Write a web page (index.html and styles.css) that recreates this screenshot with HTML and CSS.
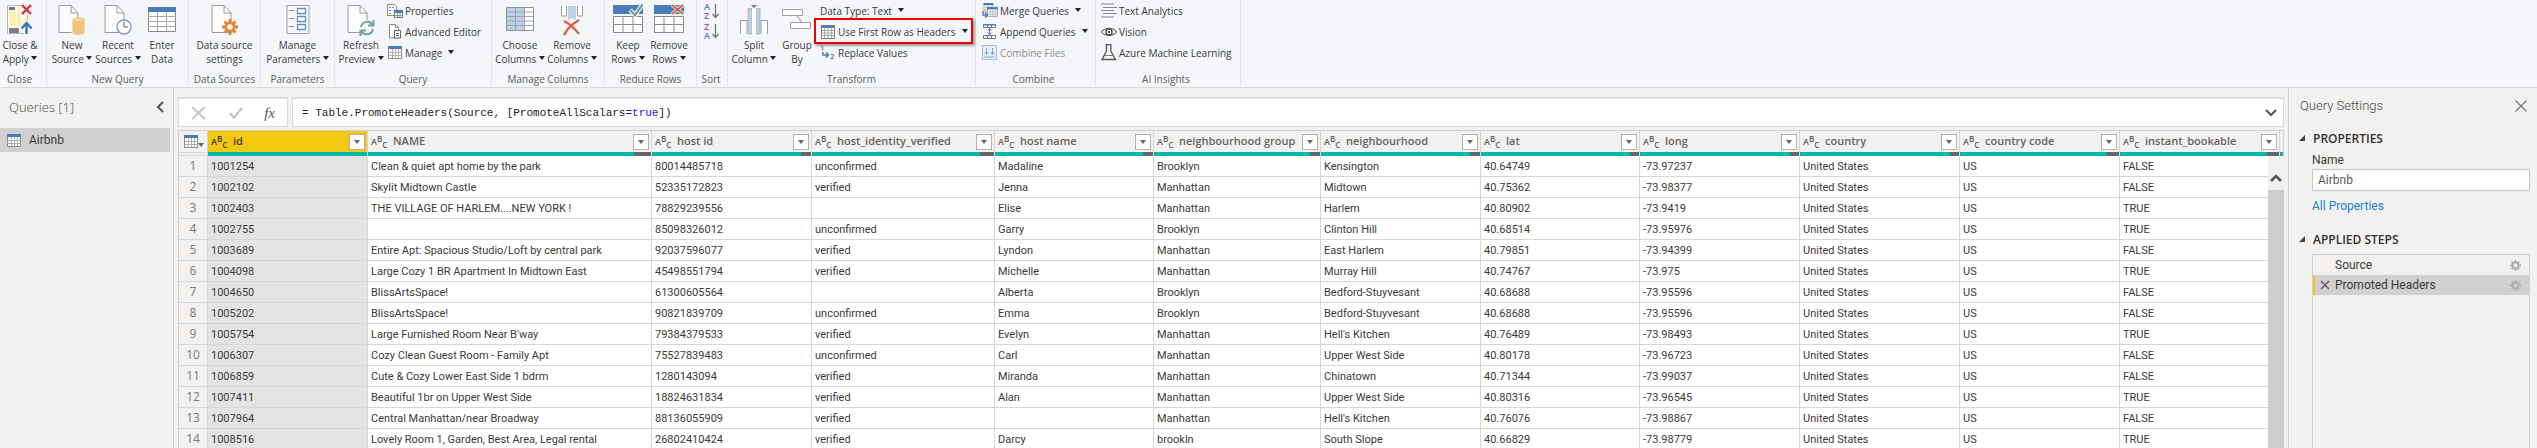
FILE: index.html
```
<!DOCTYPE html>
<html lang="en">
<head>
<meta charset="utf-8">
<title>Power Query Editor</title>
<link rel="stylesheet" href="styles.css">
</head>
<body>
<svg class="defs" aria-hidden="true">
  <symbol id="i-tbl" viewBox="0 0 14 13"><path d="M.5 .5h13v12H.5z" fill="#fff" stroke="#8a8a8a"/><path d="M.5 6.5h13M.5 9.5h13M4.5 3v9.5M7.5 3v9.5M10.5 3v9.5" stroke="#b0b0b0" fill="none"/><path d="M0 0h14v3H0z" fill="#4a7ebb"/></symbol>
  <symbol id="i-page" viewBox="0 0 20 28"><path d="M.5 .5h12l7 7.500v19.500H.5z" fill="#fdfdfd" stroke="#9a9a9a"/><path d="M12.500 .5v7.500h7" fill="none" stroke="#9a9a9a"/></symbol>
  <symbol id="i-down" viewBox="0 0 6 4"><path d="M0 0h6L3 4z" fill="currentColor"/></symbol>
  <symbol id="i-gear" viewBox="0 0 16 16"><path d="M8 0v16M0 8h16M2.500 2.500l11 11M13.500 2.500l-11 11" stroke="currentColor" stroke-width="3"/><circle cx="8" cy="8" r="4.200" fill="none" stroke="currentColor" stroke-width="2.600"/><circle cx="8" cy="8" r="2.800" fill="var(--hole)"/></symbol>
</svg>

<header class="ribbon">
  <section class="group g-close">
    <div class="tools">
      <button class="big"><svg width="28" height="32" viewBox="0 0 28 32"><path d="M1.500 1.500h20v28h-20z" fill="#fff" stroke="#b5b5b5"/><path d="M3 3h6v3H3z" fill="#777"/><path d="M3 8h7v14H3zM11 3h4v19h-4z" fill="#ffefb0"/><path d="M12 22 21 12v10z" fill="#ffefb0"/><path d="M3 24h10v5H3z" fill="#808080"/><path d="m16 1 9 9m0-9-9 9" stroke="#f4f6f9" stroke-width="5"/><path d="m16 1 9 9m0-9-9 9" stroke="#d13438" stroke-width="2.400"/><path d="M20.500 30V20m-5 4.500 5-5.500 5 5.500" stroke="#f4f6f9" stroke-width="5" fill="none"/><path d="M20.500 30V20m-5 4.500 5-5.500 5 5.500" stroke="#3b77b7" stroke-width="2.400" fill="none"/></svg><span>Close &amp;<br>Apply <svg class="dd"><use href="#i-down"/></svg></span></button>
    </div>
    <h2>Close</h2>
  </section>
  <section class="group g-new">
    <div class="tools">
      <button class="big"><svg width="28" height="32" viewBox="0 0 28 32"><use href="#i-page" x="0" y="1" width="21" height="28"/><path d="M14 16h13v13c0 3-13 3-13 0z" fill="#edc67a" stroke="#f4f6f9"/><ellipse cx="20.500" cy="16" rx="6" ry="2" fill="#f5d99a" stroke="#dcb05c" stroke-width=".6"/></svg><span>New<br>Source <svg class="dd"><use href="#i-down"/></svg></span></button>
      <button class="big"><svg width="28" height="32" viewBox="0 0 28 32"><use href="#i-page" x="0" y="1" width="21" height="28"/><circle cx="20" cy="23" r="7" fill="#fff" stroke="#6d9bd0" stroke-width="1.300"/><path d="M20 18v5h4" fill="none" stroke="#555"/></svg><span>Recent<br>Sources <svg class="dd"><use href="#i-down"/></svg></span></button>
      <button class="big"><svg width="28" height="32" viewBox="0 0 28 32"><path d="M.5 3.500h27v24H.5z" fill="#fff" stroke="#8a8a8a"/><path d="M.5 12.500h27M.5 17.500h27M.5 22.500h27M9.500 8v19M18.500 8v19" stroke="#a8a8a8"/><path d="M0 3h28v5H0z" fill="#4a7ebb"/></svg><span>Enter<br>Data</span></button>
    </div>
    <h2>New Query</h2>
  </section>
  <section class="group g-source">
    <div class="tools">
      <button class="big"><svg width="28" height="32" viewBox="0 0 28 32"><use href="#i-page" x="0" y="1" width="21" height="28"/><svg class="gear-orange" x="11" y="15" width="16" height="16"><use href="#i-gear"/></svg></svg><span>Data source<br>settings</span></button>
    </div>
    <h2>Data Sources</h2>
  </section>
  <section class="group g-param">
    <div class="tools">
      <button class="big"><svg width="24" height="32" viewBox="0 0 24 32"><path d="M1 1.500h22v28H1z" fill="#fdfdfd" stroke="#9a9a9a"/><path d="M3 6.500h5M3 14.500h5M3 22.500h5" stroke="#888"/><path d="M11.500 4.500h8v5h-8zM11.500 12.500h8v5h-8zM11.500 20.500h8v5h-8z" fill="#fff" stroke="#5b8cc7" stroke-width="1.300"/></svg><span>Manage<br>Parameters <svg class="dd"><use href="#i-down"/></svg></span></button>
    </div>
    <h2>Parameters</h2>
  </section>
  <section class="group g-query">
    <div class="tools">
      <button class="big"><svg width="28" height="32" viewBox="0 0 28 32"><use href="#i-page" x="0" y="1" width="21" height="28"/><circle cx="20" cy="24" r="8" fill="#f4f6f9"/><path d="M14 23c1-6 9-7 12-2M26.500 16v5.500H21M26 25c-1 6-9 7-12 2M13.500 32v-5.500H19" fill="none" stroke="#6fa692" stroke-width="2"/></svg><span>Refresh<br>Preview <svg class="dd"><use href="#i-down"/></svg></span></button>
      <div class="list">
        <button class="small"><svg width="16" height="14" viewBox="0 0 16 14"><path d="M.5 .5h7l2 2v9H.5z" fill="#fff" stroke="#8a8a8a"/><path d="M2 3.500h2M2 6.500h2M2 9.500h2M5 3.500h2" stroke="#888"/><path d="M7.500 7h8v6.500h-8z" fill="#fff" stroke="#777"/><path d="M7 6h9v3H7z" fill="#4a7ebb"/><path d="M8 11.500h7M10.500 9v4M13 9v4" stroke="#999"/></svg>Properties</button>
        <button class="small"><svg width="16" height="15" viewBox="0 0 16 15"><path d="M2.500 .5h6l3 3v10.500h-9z" fill="#fff" stroke="#8a8a8a"/><path d="M8.500 .5v3h3" fill="none" stroke="#8a8a8a"/><path d="M7.500 6.500h6v7.500h-6z" fill="#fff" stroke="#666"/><path d="M9 9.500h3M9 11.500h3" stroke="#666"/></svg>Advanced Editor</button>
        <button class="small"><svg width="16" height="13" viewBox="-1 0 16 13"><use href="#i-tbl" width="14" height="13"/></svg>Manage <svg class="dd"><use href="#i-down"/></svg></button>
      </div>
    </div>
    <h2>Query</h2>
  </section>
  <section class="group g-cols">
    <div class="tools">
      <button class="big"><svg width="28" height="32" viewBox="0 0 28 32"><path d="M.5 3.500h27v23H.5z" fill="#fff" stroke="#9a9a9a"/><path d="M1 3h17v23H1z" fill="#bdd0e6"/><path d="M.5 8h27M.5 12.500h27M.5 17h27M.5 21.500h27M9.500 3v23M18.500 3v23" stroke="#9aa5b2"/><path d="M.5 3.500h27v23H.5z" fill="none" stroke="#8a94a0"/></svg><span>Choose<br>Columns <svg class="dd"><use href="#i-down"/></svg></span></button>
      <button class="big"><svg width="24" height="32" viewBox="0 0 24 32"><path d="M1.500 2v10h5V2M17.500 2v10h5V2" fill="#fff" stroke="#9a9a9a"/><path d="M8 2h8v14l-4-2-4 2z" fill="#bdd0e6"/><path d="M4 17c6 3 11 8 15 13M19 16C12 20 7 25 4 31" fill="none" stroke="#d9603b" stroke-width="2.200"/></svg><span>Remove<br>Columns <svg class="dd"><use href="#i-down"/></svg></span></button>
    </div>
    <h2>Manage Columns</h2>
  </section>
  <section class="group g-rows">
    <div class="tools">
      <button class="big"><svg width="30" height="32" viewBox="0 0 30 32"><path d="M0 1h30v9H0z" fill="#4a7ebb"/><path d="M.5 12.500h29v16H.5zM.5 20.500h29M10 12.500v16M20 12.500v16" fill="#fff" stroke="#8a8a8a"/><path d="m17 6 5 5 8-11" fill="none" stroke="#f4f6f9" stroke-width="4.500"/><path d="m17 6 5 5 8-11" fill="none" stroke="#6fa692" stroke-width="2.400"/></svg><span>Keep<br>Rows <svg class="dd"><use href="#i-down"/></svg></span></button>
      <button class="big"><svg width="30" height="32" viewBox="0 0 30 32"><path d="M0 1h30v9H0z" fill="#4a7ebb"/><path d="M.5 12.500h29v16H.5zM.5 20.500h29M10 12.500v16M20 12.500v16" fill="#fff" stroke="#8a8a8a"/><path d="m18 1 11 9m0-9-11 9" stroke="#f4f6f9" stroke-width="3.500"/><path d="m18 1 11 9m0-9-11 9" stroke="#d9603b" stroke-width="2"/></svg><span>Remove<br>Rows <svg class="dd"><use href="#i-down"/></svg></span></button>
    </div>
    <h2>Reduce Rows</h2>
  </section>
  <section class="group g-sort">
    <div class="tools">
      <button class="sort" aria-label="Sort ascending"><svg width="16" height="17" viewBox="0 0 16 17"><g font-family="Open Sans, sans-serif" font-size="9" font-weight="600"><text x="0" y="7" fill="#4a7ebb">A</text><text x="0" y="16" fill="#8a5fb0">Z</text></g><path d="M11.500 1v13M8.500 11l3 3.500 3-3.500" fill="none" stroke="#777" stroke-width="1.300"/></svg></button>
      <button class="sort" aria-label="Sort descending"><svg width="16" height="17" viewBox="0 0 16 17"><g font-family="Open Sans, sans-serif" font-size="9" font-weight="600"><text x="0" y="7" fill="#8a5fb0">Z</text><text x="0" y="16" fill="#4a7ebb">A</text></g><path d="M11.500 1v13M8.500 11l3 3.500 3-3.500" fill="none" stroke="#777" stroke-width="1.300"/></svg></button>
    </div>
    <h2>Sort</h2>
  </section>
  <section class="group g-trans">
    <div class="tools">
      <button class="big"><svg width="30" height="32" viewBox="0 0 30 32"><path d="M1.500 30V16.500h6.500V30M22 30V16.500h6.500V30" fill="#fff" stroke="#9a9a9a"/><path d="M9 4.500h4V30H9zM17 4.500h4V30h-4z" fill="#bdd0e6" stroke="#9aa9ba" stroke-width=".7"/><path d="M13 5h4v25h-4z" fill="#fff"/><path d="M12 1h6l-3 3z" fill="#4a7ebb"/></svg><span>Split<br>Column <svg class="dd"><use href="#i-down"/></svg></span></button>
      <button class="big"><svg width="30" height="32" viewBox="0 0 30 32"><path d="M.5 5.500h20v6H.5zM8.500 18.500h20v6h-20z" fill="#fff" stroke="#a0a0a0"/><path d="m15 12 5 6" stroke="#888"/></svg><span>Group<br>By</span></button>
      <div class="list">
        <button class="small">Data Type: Text <svg class="dd"><use href="#i-down"/></svg></button>
        <button class="small marked"><svg width="16" height="14" viewBox="0 0 16 14"><path d="M1.500 .5h13v13h-13z" fill="#fff" stroke="#777"/><path d="M1.500 5.500h13M1.500 8h13M1.500 10.500h13M4.500 3v10M8 3v10M11.500 3v10" stroke="#a8a8a8"/><path d="M1 0h14v3H1z" fill="#5c7fa8"/></svg>Use First Row as Headers <svg class="dd"><use href="#i-down"/></svg></button>
        <button class="small"><svg width="16" height="15" viewBox="0 0 16 15"><g font-family="Open Sans, sans-serif" font-size="8" fill="#444"><text x="0" y="6">1</text><text x="10" y="14">2</text></g><path d="M3 7v3h5M6 7.500 8.500 10 6 12.500" fill="none" stroke="#4a7ebb" stroke-width="1.500"/></svg>Replace Values</button>
      </div>
    </div>
    <h2>Transform</h2>
  </section>
  <section class="group g-comb">
    <div class="tools">
      <div class="list">
        <button class="small"><svg width="16" height="15" viewBox="0 0 16 15"><use href="#i-tbl" x="1" width="11" height="9"/><use href="#i-tbl" x="5" y="4" width="11" height="10"/><path d="M1 8v4h4M3 9.500 5.500 12 3 14.500" fill="none" stroke="#4a7ebb" stroke-width="1.500"/></svg>Merge Queries <svg class="dd"><use href="#i-down"/></svg></button>
        <button class="small"><svg width="16" height="15" viewBox="0 0 16 15"><path d="M1.500 .5h12v3h-12zM1.500 11.500h12v3h-12zM5.500 1v3M9.500 1v3M5.500 11v3M9.500 11v3" fill="#fff" stroke="#777"/><path d="M1 0h13v1.500H1z" fill="#4a7ebb"/><path d="M7.500 5v5M5.500 6.500l2-2 2 2M5.500 8.500l2 2 2-2" fill="none" stroke="#4a7ebb"/></svg>Append Queries <svg class="dd"><use href="#i-down"/></svg></button>
        <button class="small" disabled><svg width="16" height="15" viewBox="0 0 16 15"><path d="M.5 .5h14v14H.5z" fill="#e6edf6" stroke="#a9bdd4"/><path d="M4.500 3v6M2.500 7l2 2.500 2-2.500M10.500 3v6M8.500 7l2 2.500 2-2.500M2.500 12h10" fill="none" stroke="#8aa6c8"/></svg>Combine Files</button>
      </div>
    </div>
    <h2>Combine</h2>
  </section>
  <section class="group g-ai">
    <div class="tools">
      <div class="list">
        <button class="small"><svg width="16" height="15" viewBox="0 0 16 15"><path d="M0 1h13M2 4.500h14M0 7.500h13M2 10.500h14M0 14h13" stroke="#858585"/></svg>Text Analytics</button>
        <button class="small"><svg width="16" height="12" viewBox="0 0 16 12"><path d="M.5 6C4 1 12 1 15.500 6 12 10.500 4 10.500.5 6z" fill="#fff" stroke="#555" stroke-width="1.200"/><circle cx="8" cy="6" r="3" fill="none" stroke="#555" stroke-width="1.500"/><circle cx="8" cy="6" r="1.200" fill="#555"/></svg>Vision</button>
        <button class="small"><svg width="16" height="17" viewBox="0 0 16 17"><path d="M4.500 .7h6M5.500 1v6L1 15.500h13.500L9.800 7V1" fill="none" stroke="#555" stroke-width="1.300"/><path d="M4 11.500h7.500" stroke="#777"/></svg>Azure Machine Learning</button>
      </div>
    </div>
    <h2>AI Insights</h2>
  </section>
</header>

<main class="work">
  <aside class="queries">
    <div class="queries-head"><h1>Queries [1]</h1><button class="plain" aria-label="Collapse"><svg width="8" height="12" viewBox="0 0 8 12"><path d="M7 1 2 6l5 5" fill="none" stroke="#555" stroke-width="2"/></svg></button></div>
    <button class="query"><svg width="14" height="13"><use href="#i-tbl"/></svg>Airbnb</button>
  </aside>

  <section class="center">
    <div class="formula-row">
      <div class="fx">
        <button class="plain" aria-label="Cancel"><svg width="16" height="14" viewBox="0 0 16 14"><path d="m1 1 13 12M14 1 1 13" stroke="#c8c6c4" stroke-width="2"/></svg></button>
        <button class="plain" aria-label="Accept"><svg width="14" height="12" viewBox="0 0 14 12"><path d="m1 6 4 4.500L13 1" fill="none" stroke="#c8c6c4" stroke-width="2.500"/></svg></button>
        <button class="plain fx-btn">fx</button>
      </div>
      <div class="formula"><code>= Table.PromoteHeaders(Source, [PromoteAllScalars=<b>true</b>])</code><button class="plain" aria-label="Expand"><svg width="12" height="8" viewBox="0 0 12 8"><path d="m1 1 5 5 5-5" fill="none" stroke="#555" stroke-width="2"/></svg></button></div>
    </div>

    <div class="grid">
      <table>
        <colgroup><col class="c-num"><col class="c-std"><col class="c-name"><col class="c-std"><col class="c-ver"><col class="c-slim"><col class="c-grp"><col class="c-std"><col class="c-slim"><col class="c-std"><col class="c-std"><col class="c-std"><col class="c-std"><col></colgroup>
        <thead>
          <tr>
            <th class="corner"><div class="hd"><svg width="14" height="13"><use href="#i-tbl"/></svg><svg class="dd"><use href="#i-down"/></svg></div><div class="bar none"></div></th>
            <th class="sel"><div class="hd"><b class="abc">A<sup>B</sup><sub>C</sub></b><span>id</span><button aria-label="Filter id"><svg class="dd"><use href="#i-down"/></svg></button></div><div class="bar"></div></th>
            <th><div class="hd"><b class="abc">A<sup>B</sup><sub>C</sub></b><span>NAME</span><button aria-label="Filter NAME"><svg class="dd"><use href="#i-down"/></svg></button></div><div class="bar"><i style="width:17px"></i></div></th>
            <th><div class="hd"><b class="abc">A<sup>B</sup><sub>C</sub></b><span>host id</span><button aria-label="Filter host id"><svg class="dd"><use href="#i-down"/></svg></button></div><div class="bar"><i style="width:10px"></i></div></th>
            <th><div class="hd"><b class="abc">A<sup>B</sup><sub>C</sub></b><span>host_identity_verified</span><button aria-label="Filter host_identity_verified"><svg class="dd"><use href="#i-down"/></svg></button></div><div class="bar"><i style="width:14px"></i></div></th>
            <th><div class="hd"><b class="abc">A<sup>B</sup><sub>C</sub></b><span>host name</span><button aria-label="Filter host name"><svg class="dd"><use href="#i-down"/></svg></button></div><div class="bar"><i style="width:10px"></i></div></th>
            <th><div class="hd"><b class="abc">A<sup>B</sup><sub>C</sub></b><span>neighbourhood group</span><button aria-label="Filter neighbourhood group"><svg class="dd"><use href="#i-down"/></svg></button></div><div class="bar"><i style="width:10px"></i></div></th>
            <th><div class="hd"><b class="abc">A<sup>B</sup><sub>C</sub></b><span>neighbourhood</span><button aria-label="Filter neighbourhood"><svg class="dd"><use href="#i-down"/></svg></button></div><div class="bar"><i style="width:10px"></i></div></th>
            <th><div class="hd"><b class="abc">A<sup>B</sup><sub>C</sub></b><span>lat</span><button aria-label="Filter lat"><svg class="dd"><use href="#i-down"/></svg></button></div><div class="bar"><i style="width:9px"></i></div></th>
            <th><div class="hd"><b class="abc">A<sup>B</sup><sub>C</sub></b><span>long</span><button aria-label="Filter long"><svg class="dd"><use href="#i-down"/></svg></button></div><div class="bar"><i style="width:9px"></i></div></th>
            <th><div class="hd"><b class="abc">A<sup>B</sup><sub>C</sub></b><span>country</span><button aria-label="Filter country"><svg class="dd"><use href="#i-down"/></svg></button></div><div class="bar"><i style="width:9px"></i></div></th>
            <th><div class="hd"><b class="abc">A<sup>B</sup><sub>C</sub></b><span>country code</span><button aria-label="Filter country code"><svg class="dd"><use href="#i-down"/></svg></button></div><div class="bar"><i style="width:12px"></i></div></th>
            <th><div class="hd"><b class="abc">A<sup>B</sup><sub>C</sub></b><span>instant_bookable</span><button aria-label="Filter instant_bookable"><svg class="dd"><use href="#i-down"/></svg></button></div><div class="bar"><i style="width:12px"></i></div></th>
            <th><div class="hd"><svg width="16" height="14" viewBox="0 0 16 14"><path d="M0 10 3 3l3 7M1 8h4" fill="none" stroke="#666463" stroke-width="1.200"/></svg></div><div class="bar"></div></th>
          </tr>
        </thead>
        <tbody>
          <tr><th>1<td>1001254<td>Clean &amp; quiet apt home by the park<td>80014485718<td>unconfirmed<td>Madaline<td>Brooklyn<td>Kensington<td>40.64749<td>-73.97237<td>United States<td>US<td>FALSE<td></tr>
          <tr><th>2<td>1002102<td>Skylit Midtown Castle<td>52335172823<td>verified<td>Jenna<td>Manhattan<td>Midtown<td>40.75362<td>-73.98377<td>United States<td>US<td>FALSE<td></tr>
          <tr><th>3<td>1002403<td>THE VILLAGE OF HARLEM....NEW YORK !<td>78829239556<td><td>Elise<td>Manhattan<td>Harlem<td>40.80902<td>-73.9419<td>United States<td>US<td>TRUE<td></tr>
          <tr><th>4<td>1002755<td><td>85098326012<td>unconfirmed<td>Garry<td>Brooklyn<td>Clinton Hill<td>40.68514<td>-73.95976<td>United States<td>US<td>TRUE<td></tr>
          <tr><th>5<td>1003689<td>Entire Apt: Spacious Studio/Loft by central park<td>92037596077<td>verified<td>Lyndon<td>Manhattan<td>East Harlem<td>40.79851<td>-73.94399<td>United States<td>US<td>FALSE<td></tr>
          <tr><th>6<td>1004098<td>Large Cozy 1 BR Apartment In Midtown East<td>45498551794<td>verified<td>Michelle<td>Manhattan<td>Murray Hill<td>40.74767<td>-73.975<td>United States<td>US<td>TRUE<td></tr>
          <tr><th>7<td>1004650<td>BlissArtsSpace!<td>61300605564<td><td>Alberta<td>Brooklyn<td>Bedford-Stuyvesant<td>40.68688<td>-73.95596<td>United States<td>US<td>FALSE<td></tr>
          <tr><th>8<td>1005202<td>BlissArtsSpace!<td>90821839709<td>unconfirmed<td>Emma<td>Brooklyn<td>Bedford-Stuyvesant<td>40.68688<td>-73.95596<td>United States<td>US<td>FALSE<td></tr>
          <tr><th>9<td>1005754<td>Large Furnished Room Near B'way<td>79384379533<td>verified<td>Evelyn<td>Manhattan<td>Hell's Kitchen<td>40.76489<td>-73.98493<td>United States<td>US<td>TRUE<td></tr>
          <tr><th>10<td>1006307<td>Cozy Clean Guest Room - Family Apt<td>75527839483<td>unconfirmed<td>Carl<td>Manhattan<td>Upper West Side<td>40.80178<td>-73.96723<td>United States<td>US<td>FALSE<td></tr>
          <tr><th>11<td>1006859<td>Cute &amp; Cozy Lower East Side 1 bdrm<td>1280143094<td>verified<td>Miranda<td>Manhattan<td>Chinatown<td>40.71344<td>-73.99037<td>United States<td>US<td>FALSE<td></tr>
          <tr><th>12<td>1007411<td>Beautiful 1br on Upper West Side<td>18824631834<td>verified<td>Alan<td>Manhattan<td>Upper West Side<td>40.80316<td>-73.96545<td>United States<td>US<td>TRUE<td></tr>
          <tr><th>13<td>1007964<td>Central Manhattan/near Broadway<td>88136055909<td>verified<td><td>Manhattan<td>Hell's Kitchen<td>40.76076<td>-73.98867<td>United States<td>US<td>FALSE<td></tr>
          <tr><th>14<td>1008516<td>Lovely Room 1, Garden, Best Area, Legal rental<td>26802410424<td>verified<td>Darcy<td>brookln<td>South Slope<td>40.66829<td>-73.98779<td>United States<td>US<td>TRUE<td></tr>
        </tbody>
      </table>
      <div class="scroll"><button class="plain" aria-label="Scroll up"><svg width="12" height="8" viewBox="0 0 12 8"><path d="m1 7 5-5 5 5" fill="none" stroke="#555" stroke-width="2.500"/></svg></button><div class="thumb"></div></div>
    </div>
  </section>

  <aside class="settings">
    <div class="settings-head"><h1>Query Settings</h1><button class="plain" aria-label="Close"><svg width="12" height="12" viewBox="0 0 12 12"><path d="m.5 .5 11 11M11.500 .5l-11 11" stroke="#777" stroke-width="1.200"/></svg></button></div>
    <h3><svg width="6" height="6" viewBox="0 0 6 6"><path d="M6 0v6H0z" fill="#444"/></svg>PROPERTIES</h3>
    <div class="block">
      <label for="qname">Name</label>
      <input id="qname" type="text" value="Airbnb">
      <a href="#">All Properties</a>
    </div>
    <h3 class="steps-title"><svg width="6" height="6" viewBox="0 0 6 6"><path d="M6 0v6H0z" fill="#444"/></svg>APPLIED STEPS</h3>
    <ol class="steps">
      <li><span>Source</span><svg class="gear"><use href="#i-gear"/></svg></li>
      <li class="current"><svg width="10" height="10" viewBox="0 0 10 10"><path d="m1 1 8 8M9 1 1 9" stroke="#666" stroke-width="1.600"/></svg><span>Promoted Headers</span><svg class="gear"><use href="#i-gear"/></svg></li>
    </ol>
  </aside>
</main>
</body>
</html>
```
FILE: styles.css
```
* { box-sizing: border-box; }
body {
  margin: 0;
  height: 100vh;
  display: flex;
  flex-direction: column;
  overflow: hidden;
  background: #f2f1ef;
  color: #3b3a39;
  font: 10px/14px "Open Sans", "Noto Sans", sans-serif;
}
h1, h2, h3, ol { margin: 0; padding: 0; font-weight: 400; list-style: none; }
button { font: inherit; color: inherit; background: none; border: 0; padding: 0; margin: 0; }
svg { flex: none; }
.defs { position: absolute; width: 0; height: 0; }
.dd { width: 6px; height: 4px; color: #222; vertical-align: 3px; }

/* Ribbon */
.ribbon { display: flex; background: #f4f6f9; border-bottom: 1px solid #d9dadb; padding-bottom: 1px; }
.group { display: flex; flex-direction: column; border-right: 1px solid #e3e5e8; }
.group h2 { font-size: 10px; line-height: 14px; text-align: center; color: #5c5b5a; white-space: nowrap; }
.tools { display: grid; height: 72px; align-items: start; }
.big { display: flex; flex-direction: column; align-items: center; padding-top: 4px; white-space: nowrap; line-height: 14px; }
.big > svg { display: block; margin-bottom: 2px; }
.list { display: flex; flex-direction: column; align-items: flex-start; }
.small { display: flex; align-items: center; gap: 2px; height: 21px; position: relative; white-space: nowrap; }
.small .dd { margin-left: 4px; margin-bottom: 2px; }
.small:disabled { color: #8f8e8d; }
.g-close { width: 47px; }
.g-close .tools { grid-template-columns: 40px; }
.g-close h2 { padding-right: 7px; }
.g-new { width: 142px; }
.g-new .tools { grid-template-columns: 44px 48px 40px; padding-left: 3px; }
.g-source { width: 72px; }
.g-source .tools, .g-param .tools { justify-content: center; }
.gear-orange { color: #e8853d; --hole: #f4f6f9; }
.g-param { width: 74px; }
.g-query { width: 157px; }
.g-query .tools { grid-template-columns: 52px auto; justify-content: start; }
.g-cols { width: 113px; }
.g-cols .tools { grid-template-columns: 52px 52px; padding-left: 2px; }
.g-rows { width: 92px; }
.g-rows .tools { grid-template-columns: 42px 40px; padding-left: 2px; }
.g-sort { width: 31px; }
.g-sort h2 { padding-right: 2px; }
.g-sort .tools { align-content: start; justify-content: center; padding-top: 3px; gap: 3px; }
.sort, .sort svg { display: block; }
.g-trans { width: 248px; }
.g-trans .tools { grid-template-columns: 44px 42px auto; justify-content: start; padding-left: 4px; }
.g-trans .small { padding-left: 2px; }
.g-comb { width: 120px; }
.g-comb .tools { padding-left: 6px; }
.g-comb h2, .g-ai h2 { padding-right: 4px; }
.g-ai { width: 145px; }
.g-ai .tools { padding-left: 5px; }
.marked::after { content: ""; position: absolute; inset: -3px -5px -2px -4px; border: 2px solid #f00000; box-shadow: 2px 2px 2px rgba(0, 0, 0, .35); }

/* Work area */
.work { flex: 1; min-height: 0; display: flex; }
.queries { width: 174px; border-right: 1px solid #d2d0ce; flex: none; }
.queries-head { display: flex; align-items: center; justify-content: space-between; height: 40px; padding: 0 9px 2px; }
.queries h1, .settings h1 { font-size: 13px; line-height: 18px; font-weight: 300; color: #4a4948; }
.query { display: flex; align-items: center; gap: 8px; width: 170px; height: 24px; padding-left: 7px; background: #d2d0ce; font-family: Roboto, sans-serif; font-size: 12px; }
.plain { display: flex; align-items: center; justify-content: center; }
.center { flex: 1; min-width: 0; display: flex; flex-direction: column; padding: 9px 4px 0; }
.formula-row { display: flex; gap: 4px; }
.fx, .formula { display: flex; align-items: center; height: 30px; background: #fff; border: 1px solid #dddbd9; border-top-width: 2px; }
.fx { width: 110px; justify-content: space-between; padding: 0 12px; }
.fx-btn { font: italic 15px/18px "Liberation Serif", serif; color: #555; }
.formula { flex: 1; justify-content: space-between; padding: 0 6px 0 9px; }
.formula code { font: 11px/16px "Liberation Mono", monospace; color: #222; }
.formula b { font-weight: 400; color: #1414ff; }

/* Data grid */
.grid { flex: 1; min-height: 0; margin-top: 3px; position: relative; overflow: hidden; border-top: 1px solid #d2d0ce; border-left: 1px solid #d2d0ce; }
table { width: 100%; table-layout: fixed; border-collapse: separate; border-spacing: 0; }
.c-num { width: 29px; }
.c-std { width: 160px; }
.c-slim { width: 159px; }
.c-name { width: 284px; }
.c-ver { width: 183px; }
.c-grp { width: 167px; }
th, td { padding: 0; overflow: hidden; white-space: nowrap; text-align: left; border-right: 1px solid #d8d7d6; }
thead th { background: #f2f1ef; font-size: 11px; font-weight: 600; color: #666463; }
.hd { display: flex; align-items: center; height: 21px; padding: 0 2px 0 3px; }
.hd span { flex: 1; margin-left: 6px; padding-bottom: 1px; }
.hd button { display: flex; align-items: center; justify-content: center; width: 16px; height: 16px; background: #fff; border: 1px solid #b3b0ad; }
.hd .dd { color: #666; }
.abc { display: flex; align-items: center; flex: none; width: 16px; font-size: 9px; line-height: 10px; font-weight: 600; }
.abc sup, .abc sub { font-size: 8px; line-height: 10px; vertical-align: baseline; }
.abc sup { padding-bottom: 5px; }
.abc sub { padding-top: 6px; }
.bar { display: flex; justify-content: flex-end; height: 4px; background: #01b8aa; }
.bar i { background: #666; }
.bar.none { background: none; border: solid #d8d7d6; border-width: 1px 0; }
.corner .hd { padding: 0 1px 0 5px; }
.corner .dd { margin-top: 7px; }
thead th.sel { background: #f2c811; color: #3b3a39; }
tbody th { font: 12px/20px "Open Sans", sans-serif; text-align: center; background: #f2f1ef; color: #7a7978; border-bottom: 1px solid #d8d7d6; }
td { height: 21px; padding: 1px 0 0 3px; background: #fff; font: 11px/19px Roboto, "Open Sans", sans-serif; border-bottom: 1px solid #d8d7d6; }
tbody th + td { background: #e4e4e4; }
.scroll { position: absolute; top: 25px; right: 0; bottom: 0; width: 16px; background: #f0f0f0; display: flex; flex-direction: column; }
.scroll button { height: 34px; padding-top: 10px; }
.thumb { flex: 1; background: #cdcdcd; }

/* Query settings */
.settings { width: 249px; flex: none; border-left: 1px solid #d2d0ce; padding: 0 7px 0 10px; display: flex; flex-direction: column; font: 12px/16px Roboto, sans-serif; }
.settings-head { display: flex; align-items: center; justify-content: space-between; height: 38px; padding: 0 3px 2px 1px; }
.settings h3 { display: flex; align-items: center; gap: 8px; font: 600 12px/16px "Open Sans", sans-serif; color: #323130; margin-top: 5px; }
.settings h3 svg { margin-bottom: 2px; }
.block { display: flex; flex-direction: column; align-items: flex-start; padding: 5px 0 0 13px; }
.block input { width: 100%; height: 22px; border: 1px solid #c8c6c4; padding: 0 5px; background: #fff; font: 12px/16px Roboto, sans-serif; color: #5a5958; margin-bottom: 7px; margin-top: 1px; }
.block a { color: #1a80d9; text-decoration: none; }
.settings .steps-title { margin-top: 18px; }
.steps { flex: 1; margin: 6px 0 0 13px; border: 1px solid #d2d0ce; border-bottom: 0; }
.steps li { display: flex; align-items: center; height: 20px; padding: 0 8px 0 22px; --hole: #f2f1ef; }
.steps span { flex: 1; }
.steps .current { background: #d2d0ce; border-left: 2px solid #f2c811; padding-left: 5px; gap: 5px; --hole: #d2d0ce; }
.gear { width: 11px; height: 11px; color: #b0aeac; }
```
